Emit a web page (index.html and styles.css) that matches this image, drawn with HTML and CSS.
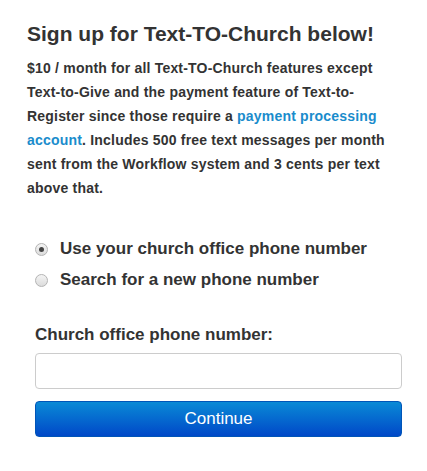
FILE: index.html
```html
<!DOCTYPE html>
<html lang="en">
<head>
    <meta charset="UTF-8">
    <meta name="viewport" content="width=device-width, initial-scale=1.0">
    <title>Sign up</title>
    <link rel="stylesheet" href="styles.css">
</head>
<body>
    <div class="container">
        <h1>Sign up for Text-TO-Church below!</h1>
        <p class="pricing">$10 / month for all Text-TO-Church features except Text-to-Give and the payment feature of Text-to-Register since those require a <a href="#">payment processing account</a>. Includes 500 free text messages per month sent from the Workflow system and 3 cents per text above that.</p>
        <div class="options">
            <label class="option"><input type="radio" name="phone" checked> Use your church office phone number</label>
            <label class="option"><input type="radio" name="phone"> Search for a new phone number</label>
        </div>
        <div class="form">
            <label class="field-label" for="phone">Church office phone number:</label>
            <input type="text" id="phone" class="field">
            <button class="continue">Continue</button>
        </div>
    </div>
</body>
</html>
```

FILE: styles.css
```css
body {
    font-family: 'Liberation Sans', Arial, sans-serif;
    margin: 0;
    padding: 0;
    background: #fff;
    color: #333;
}
.container {
    padding: 22px 25px 0 27px;
}
h1 {
    margin: 0;
    font-size: 21px;
    font-weight: bold;
    line-height: 24px;
}
.pricing {
    margin: 10px 0 0;
    padding-right: 10px;
    font-size: 14px;
    font-weight: bold;
    line-height: 24px;
    letter-spacing: 0.2px;
}
.pricing a {
    color: #1a8ccc;
    text-decoration: none;
}
.options {
    margin-top: 38px;
    padding-left: 8px;
    display: flex;
    flex-direction: column;
    gap: 9px;
}
.option {
    display: flex;
    align-items: center;
    font-size: 17px;
    font-weight: bold;
    line-height: 22px;
}
.option input {
    appearance: none;
    margin: 0 12px 0 0;
    width: 13px;
    height: 13px;
    border: 1px solid #b4b4b4;
    border-radius: 50%;
    background: linear-gradient(#f4f4f4, #dcdcdc);
    box-sizing: border-box;
    display: grid;
    place-items: center;
}
.option input:checked::after {
    content: "";
    width: 5px;
    height: 5px;
    border-radius: 50%;
    background: #444;
}
.form {
    padding-left: 8px;
    margin-top: 34px;
    display: flex;
    flex-direction: column;
}
.field-label {
    font-size: 17px;
    font-weight: bold;
    line-height: 20px;
}
.field {
    margin-top: 8px;
    height: 36px;
    box-sizing: border-box;
    border: 1px solid #ccc;
    border-radius: 4px;
    padding: 6px 10px;
    font-size: 16px;
}
.continue {
    margin-top: 12px;
    height: 36px;
    border: 1px solid #0055b8;
    border-radius: 4px;
    background: linear-gradient(#0a8ad6, #0048c8);
    color: #fff;
    font-family: 'Liberation Sans', Arial, sans-serif;
    font-size: 17px;
    cursor: pointer;
}
```
